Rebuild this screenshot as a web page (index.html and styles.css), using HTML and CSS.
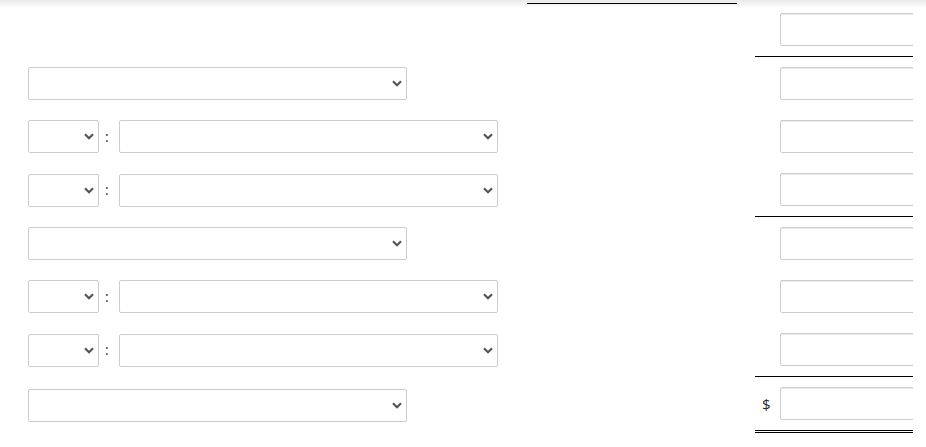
FILE: index.html
```html
<!DOCTYPE html>
<html lang="en">
<head>
<meta charset="utf-8">
<title>Statement</title>
<link rel="stylesheet" href="styles.css">
</head>
<body>
<div class="sheet">
  <div class="row row-tail">
    <div class="c1"></div><div class="c2 rule"></div><div class="c3"></div><div class="c4"></div>
  </div>

  <div class="row row-first">
    <div class="c1"></div><div class="c2"></div><div class="c3"></div>
    <div class="c4 rule"><span class="cur"></span><input class="amt" type="text"></div>
  </div>

  <div class="row">
    <div class="c1"><span class="sel wide"><select><option></option></select><svg class="chev" width="10" height="7" viewBox="0 0 10 7"><path d="M1 1.2 L5 5.2 L9 1.2"/></svg></span></div>
    <div class="c2"></div><div class="c3"></div>
    <div class="c4"><span class="cur"></span><input class="amt" type="text"></div>
  </div>

  <div class="row">
    <div class="c1 pair"><span class="sel small"><select><option></option></select><svg class="chev" width="10" height="7" viewBox="0 0 10 7"><path d="M1 1.2 L5 5.2 L9 1.2"/></svg></span><span class="colon">:</span><span class="sel wide"><select><option></option></select><svg class="chev" width="10" height="7" viewBox="0 0 10 7"><path d="M1 1.2 L5 5.2 L9 1.2"/></svg></span></div>
    <div class="c2"></div><div class="c3"></div>
    <div class="c4"><span class="cur"></span><input class="amt" type="text"></div>
  </div>

  <div class="row">
    <div class="c1 pair"><span class="sel small"><select><option></option></select><svg class="chev" width="10" height="7" viewBox="0 0 10 7"><path d="M1 1.2 L5 5.2 L9 1.2"/></svg></span><span class="colon">:</span><span class="sel wide"><select><option></option></select><svg class="chev" width="10" height="7" viewBox="0 0 10 7"><path d="M1 1.2 L5 5.2 L9 1.2"/></svg></span></div>
    <div class="c2"></div><div class="c3"></div>
    <div class="c4 rule"><span class="cur"></span><input class="amt" type="text"></div>
  </div>

  <div class="row">
    <div class="c1"><span class="sel wide"><select><option></option></select><svg class="chev" width="10" height="7" viewBox="0 0 10 7"><path d="M1 1.2 L5 5.2 L9 1.2"/></svg></span></div>
    <div class="c2"></div><div class="c3"></div>
    <div class="c4"><span class="cur"></span><input class="amt" type="text"></div>
  </div>

  <div class="row">
    <div class="c1 pair"><span class="sel small"><select><option></option></select><svg class="chev" width="10" height="7" viewBox="0 0 10 7"><path d="M1 1.2 L5 5.2 L9 1.2"/></svg></span><span class="colon">:</span><span class="sel wide"><select><option></option></select><svg class="chev" width="10" height="7" viewBox="0 0 10 7"><path d="M1 1.2 L5 5.2 L9 1.2"/></svg></span></div>
    <div class="c2"></div><div class="c3"></div>
    <div class="c4"><span class="cur"></span><input class="amt" type="text"></div>
  </div>

  <div class="row">
    <div class="c1 pair"><span class="sel small"><select><option></option></select><svg class="chev" width="10" height="7" viewBox="0 0 10 7"><path d="M1 1.2 L5 5.2 L9 1.2"/></svg></span><span class="colon">:</span><span class="sel wide"><select><option></option></select><svg class="chev" width="10" height="7" viewBox="0 0 10 7"><path d="M1 1.2 L5 5.2 L9 1.2"/></svg></span></div>
    <div class="c2"></div><div class="c3"></div>
    <div class="c4 rule"><span class="cur"></span><input class="amt" type="text"></div>
  </div>

  <div class="row">
    <div class="c1"><span class="sel wide"><select><option></option></select><svg class="chev" width="10" height="7" viewBox="0 0 10 7"><path d="M1 1.2 L5 5.2 L9 1.2"/></svg></span></div>
    <div class="c2"></div><div class="c3"></div>
    <div class="c4 total"><span class="cur">$</span><input class="amt" type="text"></div>
  </div>
</div>
</body>
</html>
```

FILE: styles.css
```css
html, body {
  margin: 0;
  padding: 0;
}
body {
  font-family: "Open Sans", "Liberation Sans", Arial, sans-serif;
  font-size: 14px;
  color: #333;
  overflow: hidden;
  background: #fff linear-gradient(to bottom, #e9e9e9 0px, #ffffff 8px) no-repeat;
  background-size: 100% 8px;
}
.sheet {
  display: flex;
  flex-direction: column;
  width: 913px;
}
.row {
  display: grid;
  grid-template-columns: 527px 210px 18px 158px;
}
.row > div {
  padding: 10px 0;
  display: flex;
  align-items: center;
  min-height: 33px;
}
.row-tail > div {
  padding: 0;
  min-height: 0;
  height: 3px;
}
.row-first > div {
  padding-top: 9px;
}
.c1 {
  padding-left: 28px !important;
}
.rule {
  border-bottom: 1px solid #000;
}
.total {
  border-bottom: 3px double #000;
}
.c4 {
  overflow: hidden;
}
.cur {
  flex: 0 0 25px;
  box-sizing: border-box;
  padding-left: 7px;
  color: #2a2a2a;
  font-size: 15px;
}
.amt {
  flex: 0 0 160px;
  width: 160px;
  height: 33px;
  box-sizing: border-box;
  margin: 0;
  border: 1px solid #ccc;
  border-radius: 2px;
  box-shadow: inset 0 1px 1px rgba(0,0,0,0.08);
  background: #fff;
  padding: 0 6px;
  font: inherit;
}
.sel {
  position: relative;
  display: inline-block;
  height: 33px;
}
.sel select {
  -webkit-appearance: none;
  appearance: none;
  display: block;
  height: 33px;
  box-sizing: border-box;
  margin: 0;
  border: 1px solid #ccc;
  border-radius: 2px;
  background: #fff;
  padding: 0 20px 0 6px;
  font: inherit;
  color: #333;
}
.sel.wide select {
  width: 379px;
}
.sel.small select {
  width: 71px;
}
.chev {
  position: absolute;
  top: 13px;
  right: 5px;
  pointer-events: none;
}
.chev path {
  fill: none;
  stroke: #555;
  stroke-width: 2.2;
  stroke-linecap: butt;
  stroke-linejoin: miter;
}
.colon {
  display: inline-block;
  width: 20px;
  padding-left: 6px;
  box-sizing: border-box;
  line-height: 1;
  color: #333;
}
```
